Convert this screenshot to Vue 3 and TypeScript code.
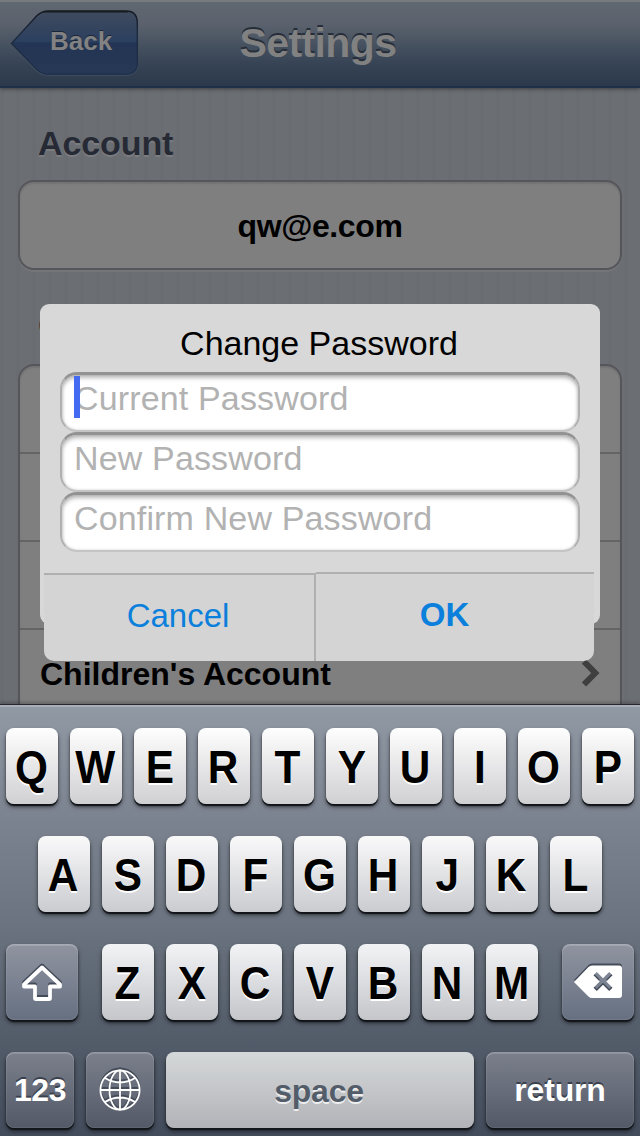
<script setup lang="ts">
interface Field { id: string; label: string; active: boolean }

const topRow: string[] = 'QWERTYUIOP'.split('')
const homeRow: string[] = 'ASDFGHJKL'.split('')
const lowerRow: string[] = 'ZXCVBNM'.split('')
const fields: Field[] = [
  { id: 'current', label: 'Current Password', active: true },
  { id: 'new', label: 'New Password', active: false },
  { id: 'confirm', label: 'Confirm New Password', active: false },
]
</script>

<template>
  <div class="screen">
    <header class="nav">
      <div class="back">
        <svg class="back-shape" width="130" height="68" viewBox="0 0 130 68">
          <defs>
            <linearGradient id="backFill" x1="0" y1="0" x2="0" y2="1">
              <stop offset="0" stop-color="#3f4b5e" />
              <stop offset="0.49" stop-color="#2b3f5f" />
              <stop offset="0.5" stop-color="#233554" />
              <stop offset="1" stop-color="#263854" />
            </linearGradient>
            <linearGradient id="backEdge" x1="0" y1="0" x2="0" y2="1">
              <stop offset="0" stop-color="#14181f" />
              <stop offset="0.35" stop-color="#1d2a3e" />
              <stop offset="1" stop-color="#1f304c" />
            </linearGradient>
          </defs>
          <path d="M1.500 34.500 L27 7 Q32 2 38 2 H116 Q127.500 2 127.500 14 V53.500 Q127.500 65 116 65 H38 Q32 65 27 61 Z" fill="none" stroke="#4f5a69" stroke-width="1.100" />
          <path d="M1.500 33.500 L27 5.500 Q32 1 38 1 H116 Q127.300 1 127.300 13 V53 Q127.300 64.300 116 64.300 H38 Q32 64.300 27 60 Z" fill="url(#backFill)" stroke="url(#backEdge)" stroke-width="1.400" />
          <path d="M33 1.700 H118" stroke="#171b22" stroke-width="1.600" />
        </svg>
        <span class="back-label">Back</span>
      </div>
      <h1 class="title">Settings</h1>
    </header>

    <main class="content">
      <h2 class="section account">Account</h2>
      <div class="card single">qw@e.com</div>
      <h2 class="section options">Options</h2>
      <div class="card list">
        <div class="row"></div>
        <div class="row"></div>
        <div class="row"></div>
        <div class="row last">
          <span>Children's Account</span>
          <svg class="chevron" width="18" height="28" viewBox="0 0 18 28">
            <path d="M2 2.500 L13.300 14 L2 25.500" fill="none" stroke="#3f3f3f" stroke-width="6" />
          </svg>
        </div>
      </div>
    </main>

    <section class="dialog">
      <h3 class="dialog-title">Change Password</h3>
      <div class="fields">
        <div v-for="f in fields" :key="f.id" class="field">
          <span>{{ f.label }}</span>
          <i v-if="f.active" class="caret"></i>
        </div>
      </div>
      <div class="actions">
        <div class="action cancel">Cancel</div>
        <div class="action ok">OK</div>
      </div>
    </section>

    <section class="keyboard">
      <div class="keys">
        <div v-for="k in topRow" :key="k" class="key letter"><span>{{ k }}</span></div>
      </div>
      <div class="keys home">
        <div v-for="k in homeRow" :key="k" class="key letter"><span>{{ k }}</span></div>
      </div>
      <div class="keys lower">
        <div class="key special">
          <svg class="glyph" width="44" height="40" viewBox="0 0 44 40">
            <path d="M22 5.500 L40 22.500 V24.500 H30 V36 Q30 37 29 37 H16 Q15 37 15 36 V24.500 H4 V22.500 Z" fill="none" stroke="#fff" stroke-width="3.800" stroke-linejoin="round" />
          </svg>
        </div>
        <div class="letters">
          <div v-for="k in lowerRow" :key="k" class="key letter"><span>{{ k }}</span></div>
        </div>
        <div class="key special">
          <svg class="glyph" width="50" height="36" viewBox="0 0 50 36">
            <path fill-rule="evenodd" fill="#fff" d="M1 18 L15.500 3 Q17 1.500 19 1.500 H46 Q49 1.500 49 4.500 V31 Q49 34 46 34 H19 Q17 34 15.500 32.500 Z M20.500 11.300 L26.700 17.500 L20.500 23.700 L23.800 27 L30 20.800 L36.200 27 L39.500 23.700 L33.300 17.500 L39.500 11.300 L36.200 8 L30 14.200 L23.800 8 Z" />
          </svg>
        </div>
      </div>
      <div class="keys bottom">
        <div class="key mode">123</div>
        <div class="key mode">
          <svg class="glyph globe" width="44" height="44" viewBox="0 0 44 44">
            <g fill="none" stroke="#fff" stroke-width="1.800">
              <circle cx="22" cy="22" r="19.600" />
              <ellipse cx="22" cy="22" rx="10.500" ry="19.600" />
              <path d="M22 2.400 V41.600 M2.400 22 H41.600 M7 10 Q22 19 37 10 M7 34 Q22 25 37 34" />
            </g>
          </svg>
        </div>
        <div class="key space">space</div>
        <div class="key mode return">return</div>
      </div>
    </section>
  </div>
</template>

<style>
body { margin: 0; }
</style>

<style scoped>
.screen {
  position: relative;
  width: 640px;
  height: 1136px;
  overflow: hidden;
  display: flex;
  flex-direction: column;
  font-family: "Liberation Sans", Arial, sans-serif;
  background: #696b71;
}
h1, h2, h3 { margin: 0; }

.nav {
  position: relative;
  z-index: 1;
  box-sizing: border-box;
  flex: none;
  height: 88px;
  display: flex;
  justify-content: center;
  background: linear-gradient(#5f6771 0, #5b626d 22px, #4b5563 38px, #384556 60px, #2b384b 86px);
  border-top: 2px solid #777b7d;
  border-bottom: 2px solid #1f2f48;
  box-shadow: 0 1px 4px rgba(0, 0, 0, 0.45);
}
.back {
  position: absolute;
  left: 10px;
  top: 8px;
  width: 130px;
  height: 68px;
}
.back-shape { display: block; }
.back-label {
  position: absolute;
  left: 40px;
  top: 16px;
  font-size: 26px;
  line-height: 30px;
  font-weight: bold;
  color: #828282;
  text-shadow: 0 -1.5px 0 #1b2636;
}
.title {
  padding-right: 4px;
  font-size: 41px;
  line-height: 82px;
  letter-spacing: -0.6px;
  font-weight: bold;
  color: #818181;
  text-shadow: 0 -2px 0 #252d38;
}

.content {
  box-sizing: border-box;
  flex: none;
  height: 616px;
  padding: 0 18px;
  overflow: hidden;
  background:
    repeating-linear-gradient(90deg, rgba(0, 0, 0, 0.02) 0, rgba(0, 0, 0, 0.02) 4px, transparent 4px, transparent 16px),
    #6b6e73;
}
.section {
  padding-left: 20px;
  font-size: 34px;
  line-height: 40px;
  letter-spacing: -0.1px;
  font-weight: bold;
  color: #262a35;
  text-shadow: 0 2px 0 #7b7c80;
}
.account { margin-top: 35px; }
.options { margin-top: 35px; }
.card {
  box-sizing: border-box;
  border: 2px solid #55565b;
  background: #7f7f7f;
  font-size: 32px;
  font-weight: bold;
  color: #000;
}
.single {
  margin-top: 17px;
  height: 90px;
  border-radius: 16px;
  line-height: 88px;
  text-align: center;
  letter-spacing: -0.4px;
  box-shadow: 0 2px 0 #747577, inset 0 2px 2px rgba(0, 0, 0, 0.1);
}
.list {
  margin-top: 19px;
  height: 400px;
  border-radius: 16px 16px 0 0;
  box-shadow: inset 0 2px 2px rgba(0, 0, 0, 0.1);
}
.row {
  box-sizing: border-box;
  height: 88px;
  border-bottom: 2px solid #646464;
}
.last {
  display: flex;
  justify-content: space-between;
  align-items: center;
  padding: 0 20px;
  border: 0;
}
.chevron { margin-top: -3px; }

.dialog {
  position: absolute;
  left: 40px;
  top: 304px;
  width: 560px;
  height: 320px;
  border-radius: 9px;
  background: #d8d8d8;
}
.dialog-title {
  padding: 19px 2px 0 0;
  text-align: center;
  font-size: 34px;
  line-height: 40px;
  font-weight: normal;
  color: #000;
}
.fields {
  display: flex;
  flex-direction: column;
  padding: 9px 20px 0;
}
.field {
  position: relative;
  box-sizing: border-box;
  height: 60px;
  padding: 0 14px;
  border: 2px solid #b0b0b0;
  border-top: 3px solid #929292;
  border-bottom-color: #c4c4c4;
  border-radius: 17px;
  background: #fff;
  box-shadow: inset 0 3px 4px rgba(0, 0, 0, 0.27), inset 0 0 3px rgba(0, 0, 0, 0.15);
  font-size: 34px;
  line-height: 46px;
  letter-spacing: 0.15px;
  color: #b2b2b2;
}
.field span { margin-left: -2px; }
.caret {
  position: absolute;
  left: 12px;
  top: 1px;
  width: 6px;
  height: 42px;
  background: #426bf2;
}
.actions {
  display: flex;
  align-items: flex-end;
  width: 550px;
  height: 89px;
  margin: 20px 0 0 4px;
  border-radius: 0 0 10px 10px;
  overflow: hidden;
}
.action {
  box-sizing: border-box;
  border-top: 2px solid #b0b0b0;
  background: #d4d4d4;
  font-size: 33px;
  text-align: center;
  color: #0a7fdc;
}
.cancel {
  width: 272px;
  height: 88px;
  border-right: 2px solid #b0b0b0;
  line-height: 82px;
  padding-right: 2px;
}
.ok {
  flex: 1;
  height: 89px;
  line-height: 82px;
  font-weight: bold;
  padding-right: 21px;
}

.keyboard {
  position: relative;
  box-sizing: border-box;
  flex: none;
  height: 432px;
  padding: 22px 6px 0;
  display: flex;
  flex-direction: column;
  gap: 32px;
  border-top: 1px solid #26282b;
  background: linear-gradient(#9199a5 0, #7c8390 115px, #6b7480 215px, #565f6c 315px, #434c5b 431px);
  box-shadow: inset 0 2px 0 #a9afba, 0 -2px 3px rgba(0, 0, 0, 0.2);
}
.keys {
  flex: none;
  display: flex;
  gap: 12px;
  height: 76px;
}
.keys:first-child { margin-top: 1px; }
.home { justify-content: center; }
.lower { justify-content: space-between; }
.letters { display: flex; gap: 12px; }
.key {
  box-sizing: border-box;
  height: 76px;
  border-radius: 8px;
  text-align: center;
  font-weight: bold;
  box-shadow: 0 2px 1px #111418, 0 3px 4px rgba(0, 0, 0, 0.55);
}
.letter {
  display: flex;
  justify-content: center;
  width: 52px;
  font-size: 46px;
  line-height: 78px;
  color: #000;
  text-shadow: 0 2px 0 #fff;
  background: linear-gradient(#fefefe, #d0d0d3);
}
.letter span {
  display: block;
  transform: translateX(-0.5px) scaleX(0.92);
}
.home .letter { background: linear-gradient(#f9f9fa, #cbccd0); }
.lower .letter { background: linear-gradient(#f2f3f5, #c5c6ca); }
.special, .mode {
  display: flex;
  align-items: center;
  justify-content: center;
  color: #fff;
}
.special {
  width: 72px;
  background: linear-gradient(#9094a0, #667081);
  box-shadow: inset 0 2px 0 rgba(255, 255, 255, 0.16), inset 0 0 0 1px rgba(255, 255, 255, 0.07), 0 2px 1px #111418, 0 3px 4px rgba(0, 0, 0, 0.55);
}
.mode {
  width: 68px;
  font-size: 32px;
  letter-spacing: -0.4px;
  background: linear-gradient(#7b808c, #535967);
  text-shadow: 0 -2px 0 #3a404b;
  box-shadow: inset 0 2px 0 rgba(255, 255, 255, 0.14), inset 0 0 0 1px rgba(255, 255, 255, 0.07), 0 2px 1px #111418, 0 3px 4px rgba(0, 0, 0, 0.55);
}
.glyph { filter: drop-shadow(0 -2px 0 #454c59); }
.globe { margin-top: -1px; }
.space {
  width: 308px;
  padding-right: 2px;
  font-size: 32px;
  line-height: 79px;
  letter-spacing: -0.2px;
  color: #535d6a;
  text-shadow: 0 2px 0 #eee;
  background: linear-gradient(#d5d8d9, #b2b3b8);
}
.return { width: 148px; letter-spacing: -0.2px; }
</style>
